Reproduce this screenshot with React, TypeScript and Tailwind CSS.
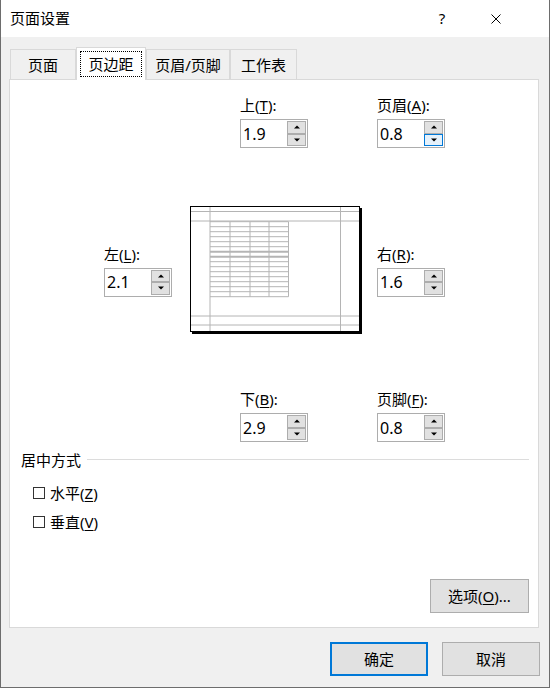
import React from "react";

const FONT = "font-['Noto_Sans','Noto_Sans_CJK_SC',sans-serif]";

function Arrow({ up }: { up?: boolean }) {
  return (
    <svg width="6" height="4" viewBox="0 0 6 4">
      {up ? <polygon points="0,3.5 6,3.5 3,0.5" fill="#000" /> : <polygon points="0,0.5 6,0.5 3,3.5" fill="#000" />}
    </svg>
  );
}

function SpinField({
  label,
  accel,
  value,
  hoverDown,
}: {
  label: string;
  accel: string;
  value: string;
  hoverDown?: boolean;
}) {
  return (
    <div className="flex flex-col w-[68px]">
      <div className="h-[20px] leading-[20px] mb-[4px] whitespace-nowrap">
        {label}(<span className="underline underline-offset-2">{accel}</span>):
      </div>
      <div className="w-[68px] h-[29px] border border-[#adadad] bg-white flex items-center pl-[2px] pr-px py-px">
        <span className="flex-1 leading-none text-[16px]">{value}</span>
        <div className="flex flex-col w-[19px] h-full">
          <div className="flex-1 border border-[#adadad] bg-[#e1e1e1] flex items-center justify-center">
            <Arrow up />
          </div>
          <div
            className={
              hoverDown
                ? "flex-1 border border-[#0078d7] bg-[#e5f1fb] flex items-center justify-center"
                : "flex-1 border border-[#adadad] bg-[#e1e1e1] flex items-center justify-center"
            }
          >
            <Arrow />
          </div>
        </div>
      </div>
    </div>
  );
}

function Preview() {
  const rows = Array.from({ length: 16 }, (_, i) => 15.7 + i * 5);
  return (
    <svg width="172" height="128" viewBox="0 0 172 128">
      <rect x="2" y="2" width="170" height="126" fill="#000" />
      <rect x="0.5" y="0.5" width="169" height="125" fill="#fff" stroke="#000" />
      <g stroke="#b4b4b4" strokeWidth="1">
        <line x1="20" y1="1" x2="20" y2="125" />
        <line x1="150.5" y1="1" x2="150.5" y2="125" />
        <line x1="1" y1="5.5" x2="169" y2="5.5" />
        <line x1="1" y1="15" x2="169" y2="15" />
        <line x1="1" y1="110" x2="169" y2="110" />
        <line x1="1" y1="119" x2="169" y2="119" />
        {[40, 60, 79, 98.5].map((x) => (
          <line key={x} x1={x} y1="15.7" x2={x} y2="90.7" />
        ))}
        {rows.map((y, i) => (
          <line key={y} x1="20" y1={y} x2="98.5" y2={y} strokeWidth={i === 6 || i === 7 ? 2 : 1} />
        ))}
      </g>
    </svg>
  );
}

function Tab({ label, width, active }: { label: string; width: string; active?: boolean }) {
  if (active) {
    return (
      <div
        className={`${width} h-[33px] -mb-px relative z-10 bg-white border-x border-t border-[#d9d9d9] flex items-center justify-center px-[3px] pt-[3px] pb-[3px]`}
      >
        <div className="w-full h-full border border-dotted border-black flex items-center justify-center pt-px">
          {label}
        </div>
      </div>
    );
  }
  return (
    <div className={`${width} h-[30px] border-x border-t border-[#d9d9d9] flex items-center justify-center pt-[2px]`}>
      {label}
    </div>
  );
}

function Check({ label, accel }: { label: string; accel: string }) {
  return (
    <div className="flex items-center h-[20px] pl-[23px]">
      <div className="w-[12px] h-[12px] border border-[#333] bg-white" />
      <span className="ml-[5px] leading-[20px]">
        {label}(<span className="underline underline-offset-2">{accel}</span>)
      </span>
    </div>
  );
}

export default function App() {
  return (
    <div
      className={`${FONT} w-[550px] h-[688px] flex flex-col bg-[#f0f0f0] border-x border-b border-[#6d6d6d] text-[15px] text-black`}
    >
      {/* title bar */}
      <div className="h-[37px] bg-white flex items-center pl-[9px]">
        <span>页面设置</span>
        <span className="ml-auto w-[20px] text-center">?</span>
        <svg className="ml-[39px] mr-[48px]" width="10" height="10" viewBox="0 0 10 10">
          <path d="M0.5 0.5 L9.5 9.5 M9.5 0.5 L0.5 9.5" stroke="#000" strokeWidth="1" />
        </svg>
      </div>

      {/* tabs */}
      <div className="mt-[10px] h-[32px] flex items-end pl-[9px]">
        <Tab label="页面" width="w-[66px]" />
        <Tab label="页边距" width="w-[70px]" active />
        <Tab label="页眉/页脚" width="w-[84px]" />
        <Tab label="工作表" width="w-[67px]" />
      </div>

      {/* panel */}
      <div className="ml-[8px] mr-[10px] h-[549px] bg-white border border-[#d9d9d9] flex flex-col">
        <div className="mt-[15px] flex pl-[230px] gap-[69px]">
          <SpinField label="上" accel="T" value="1.9" />
          <SpinField label="页眉" accel="A" value="0.8" hoverDown />
        </div>

        <div className="mt-[58px] flex items-center pl-[94px]">
          <SpinField label="左" accel="L" value="2.1" />
          <div className="ml-[18px]">
            <Preview />
          </div>
          <div className="ml-[15px]">
            <SpinField label="右" accel="R" value="1.6" />
          </div>
        </div>

        <div className="mt-[55px] flex pl-[230px] gap-[69px]">
          <SpinField label="下" accel="B" value="2.9" />
          <SpinField label="页脚" accel="F" value="0.8" />
        </div>

        <div className="mt-[8px] h-[20px] flex items-center pl-[11px] pr-[9px]">
          <span className="leading-[20px]">居中方式</span>
          <div className="flex-1 h-px bg-[#dcdcdc] ml-[6px] -mt-[2px]" />
        </div>
        <div className="mt-[13px]">
          <Check label="水平" accel="Z" />
        </div>
        <div className="mt-[9px]">
          <Check label="垂直" accel="V" />
        </div>

        <div className="mt-auto self-end mr-[9px] mb-[14px] w-[99px] h-[34px] bg-[#e1e1e1] border border-[#adadad] flex items-center justify-center">
          选项(<span className="underline underline-offset-2">O</span>)...
        </div>
      </div>

      {/* footer buttons */}
      <div className="mt-[14px] flex justify-end gap-[14px] pr-[9px]">
        <div className="w-[98px] h-[34px] bg-[#e1e1e1] border-2 border-[#0078d7] flex items-center justify-center">
          确定
        </div>
        <div className="w-[98px] h-[34px] bg-[#e1e1e1] border border-[#adadad] flex items-center justify-center">
          取消
        </div>
      </div>
    </div>
  );
}
